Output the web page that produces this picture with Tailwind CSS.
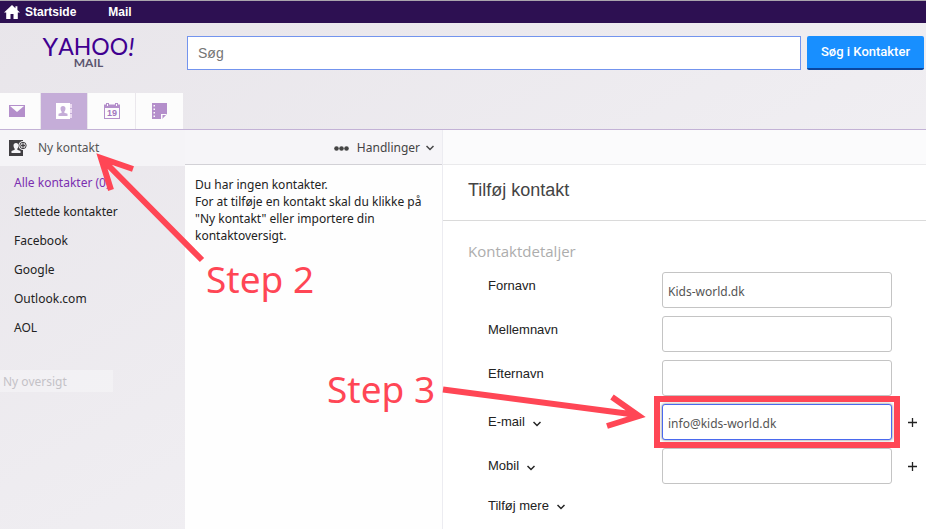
<!DOCTYPE html>
<html lang="da">
<head>
  <meta charset="UTF-8" />
  <meta name="viewport" content="width=device-width, initial-scale=1" />
  <title>Yahoo Mail - Kontakter</title>
  <script src="https://cdn.jsdelivr.net/npm/@tailwindcss/browser@4"></script>
</head>
<body class="relative flex flex-col min-h-screen overflow-x-hidden bg-linear-to-br from-[#e8e5ea] to-[#f5f4f7] font-['Noto_Sans',sans-serif] text-xs text-[#222]">

  <!-- top bar -->
  <nav class="flex items-center h-[23px] shrink-0 border-t border-[#aaa5ad] bg-[#2d1052] pl-1 font-['Liberation_Sans',sans-serif] text-xs font-bold text-white">
    <a href="#" class="flex items-center gap-[5px]">
      <svg class="w-4 h-[14px]" viewBox="0 0 16 14" fill="#fff"><path d="M8 0L0 7.4h2.2V14h4.3V9h3v5h4.3V7.4H16L13.4 5V1.2h-2v2L8 0z" /></svg>
      Startside
    </a>
    <a href="#" class="ml-8">Mail</a>
  </nav>

  <header class="shrink-0 border-b border-[#c3b2d6]">
    <div class="flex items-start pt-[13px] pr-[2px]">
      <div class="w-[187px] shrink-0 flex flex-col items-center pr-[10px] font-['Lato',sans-serif] leading-none">
        <div class="flex items-center h-5 text-[23px] leading-5 text-[#400090]"><span class="text-[25px]">Y</span><span>AHOO</span><span class="text-[25px] italic">!</span></div>
        <div class="h-[14px] text-xs leading-[14px] font-bold text-[#5c5670]">MAIL</div>
      </div>
      <input type="text" aria-label="Søg" placeholder="Søg"
        class="flex-1 min-w-0 h-[34px] border border-[#7394ee] bg-white px-[10px] font-['Liberation_Sans',sans-serif] text-sm placeholder:text-[#757575] focus:outline-none" />
      <button class="ml-[6px] w-[117px] h-[34px] shrink-0 rounded-[2px] border-b-2 border-[#0a46a0] bg-[#188fff] font-['Roboto',sans-serif] text-[13px] font-medium text-white">Søg i Kontakter</button>
    </div>

    <div class="flex gap-px mt-[23px] h-9">
      <a href="#" aria-label="Mail" class="flex items-center w-10 bg-[#fcfcfc] pl-[9px]">
        <svg class="w-4 h-3" viewBox="0 0 16 12"><path fill="#b48fcb" d="M0 0h16v12H0z" /><path fill="#fcfcfc" d="M1 1h14L8 7z" /></svg>
      </a>
      <a href="#" aria-label="Kontakter" class="flex items-center justify-center w-[46px] bg-[#c5add8]">
        <svg class="w-4 h-4" viewBox="0 0 16 16"><path fill="#fff" d="M0 0h14v16H0z" /><path fill="#ecdcf2" d="M14 1h2v4h-2zM14 6h2v4h-2zM14 11h2v4h-2z" /><path fill="#c5add8" d="M7 3c1.600 0 2.500 1.100 2.500 2.500S8.800 8.200 8.300 8.700v1l3.200 1.100V13h-9v-2.200l3.200-1.100v-1C5.200 8.200 4.500 7 4.500 5.500S5.400 3 7 3z" /></svg>
      </a>
      <a href="#" aria-label="Kalender" class="flex items-center justify-center w-[47px] bg-[#fcfcfc]">
        <svg class="w-4 h-4" viewBox="0 0 16 16"><path fill="#b48fcb" d="M0 1.500h2V0h3v1.500h6V0h3v1.500h2V16H0z" /><path fill="#fcfcfc" d="M1 5h14v10H1zM3 1h1v2H3zM12 1h1v2h-1z" /><text x="8" y="13" text-anchor="middle" font-family="Liberation Sans" font-size="9" font-weight="bold" fill="#a277bf">19</text></svg>
      </a>
      <a href="#" aria-label="Noter" class="flex items-center justify-center w-[47px] bg-[#fcfcfc]">
        <svg class="w-[15px] h-4" viewBox="0 0 15 16"><path fill="#b48fcb" d="M0 0h15v11l-5 5H0z" /><path fill="#fcfcfc" d="M9 11h6l-5 5H9z" /><path fill="#b48fcb" d="M10.500 12h3.500l-3.500 3.500z" /><path fill="#fcfcfc" d="M1.500 2H3v1.500H1.500zM1.500 5.500H3V7H1.500zM1.500 9H3v1.500H1.500zM1.500 12.500H3V14H1.500z" /></svg>
      </a>
    </div>
  </header>

  <div class="flex flex-1">
    <!-- folders -->
    <aside class="w-[185px] shrink-0">
      <button class="flex items-center gap-[11px] w-full h-9 bg-[#f5f4f7] pl-[9px] text-[#555]">
        <svg class="w-[18px] h-4" viewBox="0 0 18 16"><path fill="#403e42" d="M0 0h14v16H0z" /><path fill="#f5f4f7" d="M7 3c1.600 0 2.500 1.100 2.500 2.600S8.800 8.300 8.300 8.800v1l3.200 1.200v2h-9v-2l3.200-1.200v-1C5.200 8.300 4.500 7.100 4.500 5.600S5.400 3 7 3z" /><circle cx="14" cy="5.500" r="4.500" fill="#f5f4f7" /><circle cx="14" cy="5.500" r="3.200" fill="#f5f4f7" stroke="#403e42" /><path stroke="#403e42" stroke-width="1.300" d="M14 3.300v4.400M11.800 5.500h4.400" /></svg>
        Ny kontakt
      </button>
      <ul class="flex flex-col pl-[14px] pt-[2px] leading-[29px]">
        <li><a href="#" class="text-[#7b2fb0]">Alle kontakter (0)</a></li>
        <li><a href="#">Slettede kontakter</a></li>
        <li><a href="#">Facebook</a></li>
        <li><a href="#">Google</a></li>
        <li><a href="#">Outlook.com</a></li>
        <li><a href="#">AOL</a></li>
      </ul>
      <button class="mt-7 w-[113px] h-[22px] bg-white/30 pl-[3px] pt-[2px] text-left text-[#c4c2c7]">Ny oversigt</button>
    </aside>

    <!-- contact list -->
    <section class="w-[258px] shrink-0 border-r border-[#ececf1] bg-[#fefefe]">
      <div class="flex items-center justify-end h-[35px] border-b border-[#d2d1d6] bg-[#f6f5f8] pt-[2px] pr-2 text-[#444]">
        <button class="flex items-center gap-[6px]">
          <svg class="w-[15px] h-[5px] mr-[2px]" viewBox="0 0 15 5" fill="#444"><circle cx="2.500" cy="2.500" r="2.300" /><circle cx="7.500" cy="2.500" r="2.300" /><circle cx="12.500" cy="2.500" r="2.300" /></svg>
          Handlinger
          <svg class="w-2 h-[6px]" viewBox="0 0 8 6" fill="none" stroke="#444" stroke-width="1.500"><path d="M.5 1L4 4.500 7.500 1" /></svg>
        </button>
      </div>
      <p class="px-[10px] pt-[11px] leading-[17px]">Du har ingen kontakter.<br />For at tilføje en kontakt skal du klikke på "Ny kontakt" eller importere din kontaktoversigt.</p>
    </section>

    <!-- contact form -->
    <main class="flex-1 min-w-0 bg-white font-['Liberation_Sans',sans-serif] text-[13px]">
      <div class="h-[35px] border-b border-[#eaeaec] bg-[#fbfbfc]"></div>
      <h1 class="flex items-center h-14 border-b border-[#dadada] pb-[6px] pl-[25px] text-lg text-[#444]">Tilføj kontakt</h1>
      <form class="pl-[25px] pt-[19px]">
        <h2 class="font-['Open_Sans',sans-serif] text-[15px] leading-[22px] text-[#adadad]">Kontaktdetaljer</h2>
        <div class="grid grid-cols-[174px_230px_auto] gap-y-2 pl-5 pt-[10px]">
          <label for="first" class="pt-[5px]">Fornavn</label>
          <input id="first" type="text" value="Kids-world.dk" class="h-9 rounded-[3px] border border-[#c4c4c4] bg-white px-[5px] pt-[2px] font-['Noto_Sans',sans-serif] text-xs text-[#555] focus:outline-none" />
          <span></span>

          <label for="middle" class="pt-[5px]">Mellemnavn</label>
          <input id="middle" type="text" class="h-9 rounded-[3px] border border-[#c4c4c4] bg-white px-[5px] pt-[2px] font-['Noto_Sans',sans-serif] text-xs text-[#555] focus:outline-none" />
          <span></span>

          <label for="last" class="pt-[5px]">Efternavn</label>
          <input id="last" type="text" class="h-9 rounded-[3px] border border-[#c4c4c4] bg-white px-[5px] pt-[2px] font-['Noto_Sans',sans-serif] text-xs text-[#555] focus:outline-none" />
          <span></span>

          <div class="flex items-center gap-2">
            <label for="email">E-mail</label>
            <button type="button" aria-label="Vælg e-mailtype"><svg class="w-2 h-[6px] mt-1" viewBox="0 0 8 6" fill="none" stroke="#222" stroke-width="1.500"><path d="M.5 1L4 4.500 7.500 1" /></svg></button>
          </div>
          <div class="relative">
            <input id="email" type="text" value="info@kids-world.dk" class="block w-full h-9 rounded-[3px] border border-[#4a69ee] bg-white px-[5px] pt-[2px] font-['Noto_Sans',sans-serif] text-xs text-[#555] shadow-[0_0_3px_#777] focus:outline-none" />
            <div class="absolute z-10 -inset-2 border-6 border-[#ff4655] pointer-events-none"></div>
          </div>
          <button type="button" aria-label="Tilføj e-mail" class="pl-[15px]"><svg class="w-[11px] h-[11px]" viewBox="0 0 11 11" stroke="#222" stroke-width="1.300"><path d="M5.500 1v9M1 5.500h9" /></svg></button>

          <div class="flex items-center gap-2">
            <label for="mobile">Mobil</label>
            <button type="button" aria-label="Vælg telefontype"><svg class="w-2 h-[6px] mt-1" viewBox="0 0 8 6" fill="none" stroke="#222" stroke-width="1.500"><path d="M.5 1L4 4.500 7.500 1" /></svg></button>
          </div>
          <input id="mobile" type="text" class="h-9 rounded-[3px] border border-[#c4c4c4] bg-white px-[5px] pt-[2px] font-['Noto_Sans',sans-serif] text-xs text-[#555] focus:outline-none" />
          <button type="button" aria-label="Tilføj telefon" class="pl-[15px]"><svg class="w-[11px] h-[11px]" viewBox="0 0 11 11" stroke="#222" stroke-width="1.300"><path d="M5.500 1v9M1 5.500h9" /></svg></button>

          <button type="button" class="flex items-center gap-2 pt-[5px]">Tilføj mere <svg class="w-2 h-[6px] mt-[2px]" viewBox="0 0 8 6" fill="none" stroke="#222" stroke-width="1.500"><path d="M.5 1L4 4.500 7.500 1" /></svg></button>
        </div>
      </form>
    </main>
  </div>

  <!-- guide arrows and step labels on top of the page -->
  <svg class="absolute top-0 left-0 w-[926px] h-[529px] pointer-events-none" viewBox="0 0 926 529" fill="none" stroke="#ff4655" stroke-width="6">
    <path d="M202 260L103 160M133 169L101 158L111 190" />
    <path d="M443 389.500L638 415M612 397L639 416L607 426" />
  </svg>
  <div class="absolute left-[206px] top-[254px] text-[37px] leading-[50px] text-[#ff4655] pointer-events-none">Step 2</div>
  <div class="absolute left-[327px] top-[364px] text-[37px] leading-[50px] text-[#ff4655] pointer-events-none">Step 3</div>
</body>
</html>
